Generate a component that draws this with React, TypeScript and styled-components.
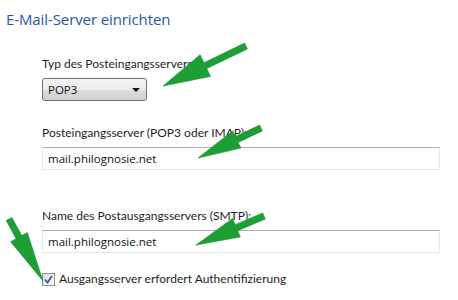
import styled, { createGlobalStyle } from "styled-components";

const GlobalStyle = createGlobalStyle`
  html, body {
    margin: 0;
    padding: 0;
    background: #ffffff;
  }
  body {
    font-family: "Open Sans", "Noto Sans", sans-serif;
    color: #1e1e1e;
  }
`;

const Page = styled.div`
  position: relative;
  width: 458px;
  height: 300px;
  overflow: hidden;
  background: #ffffff;
`;

const Title = styled.h1`
  margin: 0;
  padding: 9px 0 0 6px;
  font-size: 15px;
  line-height: 20px;
  font-weight: 400;
  color: #1f58a6;
  letter-spacing: -0.1px;
`;

const Form = styled.div`
  display: flex;
  flex-direction: column;
  padding: 27px 0 0 42px;
  width: 398px;
`;

const Field = styled.div<{ $gap?: number }>`
  display: flex;
  flex-direction: column;
  margin-bottom: ${(p) => p.$gap ?? 0}px;
`;

const Label = styled.label`
  font-family: "Lato", "Open Sans", sans-serif;
  font-size: 12px;
  line-height: 16px;
  margin-bottom: 6px;
  color: #1e1e1e;
`;

const Select = styled.div`
  display: flex;
  align-items: center;
  justify-content: space-between;
  box-sizing: border-box;
  width: 105px;
  height: 23px;
  padding: 0 6px 0 5px;
  border: 1px solid #707070;
  border-radius: 3px;
  background: linear-gradient(#f3f3f3 0%, #ebebeb 50%, #dddddd 51%, #cfcfcf 100%);
  font-size: 11.5px;
  color: #111;
`;

const Caret = styled.span`
  width: 0;
  height: 0;
  border-left: 4px solid transparent;
  border-right: 4px solid transparent;
  border-top: 4px solid #111;
`;

const Input = styled.div`
  box-sizing: border-box;
  height: 23px;
  width: 398px;
  padding: 0 5px;
  display: flex;
  align-items: center;
  border: 1px solid #e3e9ef;
  border-top-color: #abadb3;
  background: #fff;
  font-size: 11.5px;
  color: #111;
`;

const CheckRow = styled.div`
  display: flex;
  align-items: center;
  gap: 4px;
  font-family: "Lato", "Open Sans", sans-serif;
  font-size: 12px;
  line-height: 16px;
`;

const Box = styled.span`
  display: inline-flex;
  box-sizing: border-box;
  width: 13px;
  height: 13px;
  border: 1px solid #8e8f8f;
  background: linear-gradient(135deg, #dcdcdc, #fbfbfb);
  padding: 1px;
`;

const ArrowLayer = styled.svg`
  position: absolute;
  left: 0;
  top: 0;
  pointer-events: none;
`;

type Pt = [number, number];

function arrowPoints(tail: Pt, tip: Pt, shaft: number, headLen: number, headW: number) {
  const dx = tip[0] - tail[0];
  const dy = tip[1] - tail[1];
  const len = Math.hypot(dx, dy);
  const ux = dx / len;
  const uy = dy / len;
  const nx = -uy;
  const ny = ux;
  const bx = tip[0] - ux * headLen;
  const by = tip[1] - uy * headLen;
  const pts: Pt[] = [
    [tail[0] + (nx * shaft) / 2, tail[1] + (ny * shaft) / 2],
    [bx + (nx * shaft) / 2, by + (ny * shaft) / 2],
    [bx + (nx * headW) / 2, by + (ny * headW) / 2],
    tip,
    [bx - (nx * headW) / 2, by - (ny * headW) / 2],
    [bx - (nx * shaft) / 2, by - (ny * shaft) / 2],
    [tail[0] - (nx * shaft) / 2, tail[1] - (ny * shaft) / 2],
  ];
  return pts.map((p) => p.map((v) => v.toFixed(1)).join(",")).join(" ");
}

const arrows: { tail: Pt; tip: Pt; head: number; width: number }[] = [
  { tail: [246, 46], tip: [163, 86], head: 47, width: 24 },
  { tail: [261, 128], tip: [198, 158], head: 43, width: 19 },
  { tail: [264, 216], tip: [196, 245], head: 44, width: 20 },
  { tail: [9, 219], tip: [43, 281], head: 50, width: 19 },
];

function GreenArrows() {
  return (
    <ArrowLayer width={458} height={300} viewBox="0 0 458 300">
      {arrows.map((a, i) => (
        <polygon
          key={i}
          points={arrowPoints(a.tail, a.tip, 6.5, a.head, a.width)}
          fill="#1d9f35"
          stroke="#17902d"
          strokeWidth={0.6}
          strokeLinejoin="round"
        />
      ))}
    </ArrowLayer>
  );
}

function CheckMark() {
  return (
    <svg width={9} height={9} viewBox="0 0 9 9">
      <path d="M1 4.5 L3.5 7.5 L8 1" fill="none" stroke="#3c5a9a" strokeWidth={1.8} />
    </svg>
  );
}

function App() {
  return (
    <Page>
      <GlobalStyle />
      <Title>E-Mail-Server einrichten</Title>
      <Form>
        <Field $gap={24}>
          <Label>Typ des Posteingangsservers</Label>
          <Select>
            POP3
            <Caret />
          </Select>
        </Field>
        <Field $gap={38}>
          <Label>Posteingangsserver (POP3 oder IMAP):</Label>
          <Input>mail.philognosie.net</Input>
        </Field>
        <Field $gap={18}>
          <Label>Name des Postausgangsservers (SMTP):</Label>
          <Input>mail.philognosie.net</Input>
        </Field>
        <CheckRow>
          <Box>
            <CheckMark />
          </Box>
          Ausgangsserver erfordert Authentifizierung
        </CheckRow>
      </Form>
      <GreenArrows />
    </Page>
  );
}

export default App;
